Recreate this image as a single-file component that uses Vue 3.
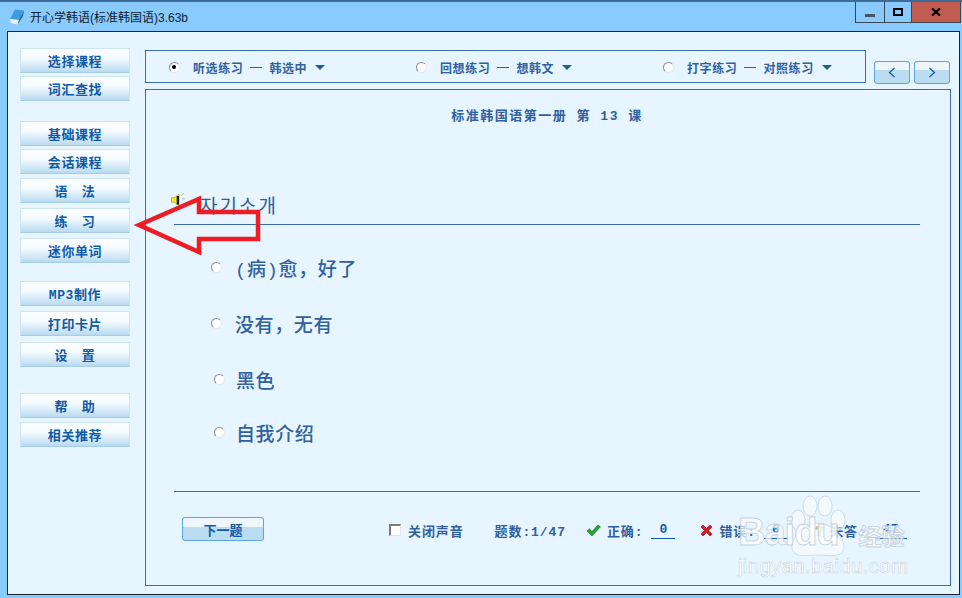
<script setup>
const navGroups = [
  [{ t: '选择课程' }, { t: '词汇查找' }],
  [{ t: '基础课程' }, { t: '会话课程' }, { t: '语　法', g: 1 }, { t: '练　习', g: 2 }, { t: '迷你单词', g: 2 }],
  [{ t: 'MP3制作' }, { t: '打印卡片', g: 2 }, { t: '设　置', g: 3 }],
  [{ t: '帮　助' }, { t: '相关推荐', g: 1 }],
]
const modes = [
  { a: '听选练习', b: '韩选中', on: true },
  { a: '回想练习', b: '想韩文' },
  { a: '打字练习', b: '对照练习' },
]
const options = ['(病)愈，好了', '没有，无有', '黑色', '自我介绍']
</script>

<template>
  <div class="win">
    <header class="titlebar">
      <svg class="book" width="16" height="16" viewBox="0 0 16 16">
        <path d="M6 0.5 L15 1.5 L10 11 L1 10 Z" fill="#3f9be0" />
        <path d="M1 10 L10 11 L8.5 15.5 L2 14 Z" fill="#eef2f6" />
        <path d="M10 11 L15 1.5 L14 7 L8.5 15.5 Z" fill="#2a5f94" />
      </svg>
      <span class="apptitle">开心学韩语(标准韩国语)3.63b</span>
      <div class="wctl">
        <div class="wbtn wmin"><i></i></div>
        <div class="wbtn wmax"><i></i></div>
        <div class="wbtn wclose">
          <svg width="10" height="8" viewBox="0 0 10 8"><path d="M1 0.5 L9 7.5 M9 0.5 L1 7.5" stroke="#000" stroke-width="2.2" /></svg>
        </div>
      </div>
    </header>

    <div class="client">
      <aside class="side">
        <div v-for="(grp, i) in navGroups" :key="i" class="grp">
          <button
            v-for="n in grp"
            :key="n.t"
            class="navbtn"
            :style="n.g ? { marginTop: n.g + 'px' } : null"
          >{{ n.t }}</button>
        </div>
      </aside>

      <main class="main">
        <div class="toprow">
          <div class="modes">
            <label v-for="m in modes" :key="m.a" class="mode">
              <span class="radio small" :class="{ on: m.on }"></span>
              <span class="mtext">{{ m.a }}</span>
              <span class="mdash"></span>
              <span class="mtext">{{ m.b }}</span>
              <span class="caret"></span>
            </label>
          </div>
          <div class="arrows">
            <button class="arrbtn">
              <svg width="8" height="11" viewBox="0 0 8 11"><path d="M6.5 1 L1.5 5.5 L6.5 10" fill="none" stroke="#0f5aa8" stroke-width="1.2" /></svg>
            </button>
            <button class="arrbtn">
              <svg width="8" height="11" viewBox="0 0 8 11"><path d="M1.5 1 L6.5 5.5 L1.5 10" fill="none" stroke="#0f5aa8" stroke-width="1.2" /></svg>
            </button>
          </div>
        </div>

        <section class="panel">
          <h1 class="ptitle">标准韩国语第一册 第 13 课</h1>
          <div class="question">
            <svg class="speaker" width="16" height="14" viewBox="0 0 14 12">
              <path d="M0.5 4 H3 L7 1 V11 L3 8 H0.5 Z" fill="#f4ea1e" stroke="#a99a10" stroke-width="0.6" />
              <path d="M5 2.5 H7 V10 H5 Z" fill="#111" />
              <path d="M9 2 L11 0.5 M9.5 5 H12" stroke="#9aa4ad" stroke-width="0.8" />
            </svg>
            <span class="korean">자기소개</span>
          </div>
          <ul class="opts">
            <li v-for="(o, i) in options" :key="o" class="opt" :class="'opt' + i">
              <span class="radio"></span>
              <span>{{ o }}</span>
            </li>
          </ul>
          <div class="foot">
            <button class="nextbtn">下一题</button>
            <div class="stats">
              <span class="check"></span>
              <span class="st s-mute">关闭声音</span>
              <span class="st s-count">题数:1/47</span>
              <svg class="ico" width="15" height="13" viewBox="0 0 15 13"><path d="M1 7 L3.5 4.8 L6 7.5 L12 1 L14.5 2.8 L6 12 Z" fill="#2ca02c" stroke="#137a1c" stroke-width="0.6" /></svg>
              <span class="st">正确:</span><span class="val v0">0</span>
              <svg class="ico ico-x" width="13" height="13" viewBox="0 0 13 13"><path d="M1 3 L3 1 L6.5 4.5 L10 1 L12 3 L8.5 6.5 L12 10 L10 12 L6.5 8.5 L3 12 L1 10 L4.5 6.5 Z" fill="#e8141c" stroke="#8e0c12" stroke-width="0.6" /></svg>
              <span class="st">错误:</span><span class="val v1">0</span>
              <span class="qm">?</span>
              <span class="st">未答:</span><span class="val v2">47</span>
            </div>
          </div>
        </section>
      </main>
    </div>

    <!-- annotation arrow drawn over the window -->
    <svg class="redarrow" width="130" height="64" viewBox="0 0 130 64">
      <path d="M6 31 L66 5 L66 18 L125 18 L125 45 L66 45 L66 58 Z" fill="none" stroke="#ee1c25" stroke-width="4.5" stroke-linejoin="miter" />
    </svg>

    <!-- watermark -->
    <div class="wm">
      <svg class="paw" width="60" height="64" viewBox="0 0 60 64">
        <g fill="#fff" fill-opacity="0.5" stroke="#c8d4dc" stroke-width="0.8">
          <ellipse cx="9" cy="25" rx="7" ry="10" />
          <ellipse cx="21" cy="11" rx="7" ry="10" />
          <ellipse cx="36" cy="11" rx="7" ry="10" />
          <ellipse cx="49" cy="25" rx="7" ry="10" />
          <path d="M29 28 C40 28 55 40 55 52 C55 64 38 60 29 60 C20 60 3 64 3 52 C3 40 18 28 29 28 Z" />
        </g>
      </svg>
      <div class="wm1"><b>Bai</b><b class="du">du</b><span class="jy">经验</span></div>
      <div class="wm2">jingyan.baidu.com</div>
    </div>
  </div>
</template>

<style>
html, body { margin: 0; padding: 0; background: #8acbff; }
</style>

<style scoped>
* { box-sizing: border-box; }
.win {
  position: relative;
  width: 962px;
  height: 598px;
  overflow: hidden;
  background: #8acbff;
  border-top: 2px solid #3d6b96;
  font-family: "Liberation Mono", "Noto Sans CJK SC", monospace;
  color: #31609f;
}
.titlebar {
  height: 29px;
  display: flex;
  align-items: center;
  padding-left: 9px;
}
.apptitle {
  margin-left: 5px;
  font-family: "Liberation Sans", "Noto Sans CJK SC", sans-serif;
  font-size: 12px;
  color: #10202c;
}
.wctl {
  margin-left: auto;
  margin-right: 1px;
  align-self: flex-start;
  display: flex;
  height: 21px;
  border: 1px solid #3a4650;
  border-top: 0;
}
.wbtn { display: flex; align-items: center; justify-content: center; }
.wmin { width: 29px; border-right: 1px solid #3a4650; }
.wmin i { display: block; width: 10px; height: 3px; background: #4a5560; margin-top: 6px; }
.wmax { width: 27px; border-right: 1px solid #3a4650; }
.wmax i { display: block; width: 10px; height: 8px; border: 2px solid #000; }
.wclose { width: 48px; background: #c25b50; }
.client {
  margin-left: 7px;
  margin-right: 2px;
  height: 564px;
  border: 1px solid #1c2430;
  background: #e6f5ff;
  display: flex;
}
.side {
  width: 137px;
  padding: 16px 0 0 12px;
  flex: none;
}
.grp { display: flex; flex-direction: column; margin-bottom: 17px; }
.grp:nth-child(2) { margin-bottom: 15px; }
.grp:nth-child(3) { margin-bottom: 23px; }
.navbtn {
  width: 110px;
  height: 25px;
  margin: 0 0 3px;
  padding: 0;
  border: 1px solid #cce4f3;
  border-bottom-color: #a5cde9;
  background: linear-gradient(#fcfeff 0%, #f5fbff 40%, #b9daf0 100%);
  color: #0f5aa8;
  font: 700 13px "Liberation Mono", "Noto Sans CJK SC", monospace;
  letter-spacing: 0.6px;
}
.main { flex: 1; display: flex; flex-direction: column; padding-top: 18px; }
.toprow { display: flex; height: 39px; flex: none; }
.modes {
  flex: none;
  width: 721px;
  height: 33px;
  border: 1px solid #3b6cad;
  display: flex;
  align-items: center;
  padding: 2px 0 0 23px;
}
.mode { flex: none; display: flex; align-items: center; font-size: 12px; font-weight: 700; width: 247px; white-space: nowrap; }
.mode .mtext { letter-spacing: 0.6px; }
.mode .radio { margin-right: 13px; }
.mdash { display: inline-block; width: 12px; height: 1px; background: #31609f; margin: 0 7px 0 7px; }
.caret {
  width: 0; height: 0; margin-left: 8px;
  border: 5px solid transparent;
  border-top: 5px solid #1f5f94;
  border-bottom: 0;
}
.radio {
  flex: none;
  display: inline-block;
  width: 11px;
  height: 11px;
  border-radius: 50%;
  background: #fff;
  border: 1.5px solid #8b8b8b;
  border-right-color: #e8e8e8;
  border-bottom-color: #e8e8e8;
  position: relative;
}
.radio.on::after {
  content: "";
  position: absolute;
  left: 2px; top: 2px;
  width: 4px; height: 4px;
  border-radius: 50%;
  background: #000;
}
.arrows { display: flex; gap: 4px; margin-left: 8px; margin-top: 11px; }
.arrbtn {
  width: 36px;
  height: 23px;
  padding: 0;
  border: 1px solid #5aa6de;
  border-radius: 3px;
  background: linear-gradient(#eef6fb 0 40%, #bcdcf2 40% 100%);
  display: flex;
  align-items: center;
  justify-content: center;
}
.panel {
  width: 806px;
  height: 497px;
  flex: none;
  border: 1px solid #3b6cad;
  padding: 0 30px 0 28px;
  display: flex;
  flex-direction: column;
}
.ptitle {
  margin: 17px 0 0;
  height: 19px;
  line-height: 19px;
  text-align: center;
  font-size: 13px;
  font-weight: 700;
  letter-spacing: 1.5px;
  color: #31609f;
}
.question {
  margin-top: 52px;
  height: 47px;
  border-bottom: 1px solid #3b6cad;
  position: relative;
  padding-left: 26px;
}
.speaker { position: absolute; left: -3px; top: 15px; }
.korean { font-family: "Noto Sans CJK KR", sans-serif; font-size: 19px; line-height: 30px; padding-top: 12px; display: block; letter-spacing: 2px; }
.opts { list-style: none; margin: 0; padding: 0; height: 266px; }
.opt {
  display: flex;
  align-items: center;
  height: 27px;
  font-size: 19px;
  font-weight: 500;
  letter-spacing: 0.6px;
  color: #31609f;
}
.opt .radio { margin-right: 13px; }
.opt0 { margin-top: 29px; margin-left: 37px; }
.opt1 { margin-top: 29px; margin-left: 37px; }
.opt2 { margin-top: 29px; margin-left: 40px; }
.opt3 { margin-top: 26px; margin-left: 40px; }
.opt2 .radio, .opt3 .radio { margin-right: 11px; }
.foot {
  border-top: 1px solid #3b6cad;
  display: flex;
  align-items: flex-start;
  padding: 25px 0 0 8px;
}
.nextbtn {
  width: 82px;
  height: 24px;
  padding: 0;
  border: 1px solid #5aa6de;
  border-radius: 3px;
  background: linear-gradient(#eef6fb 0 40%, #bcdcf2 40% 100%);
  color: #0f5aa8;
  font: 700 13px "Noto Sans CJK SC", sans-serif;
}
.stats {
  display: flex;
  align-items: center;
  height: 26px;
  margin-left: 125px;
  font-size: 13px;
  font-weight: 700;
  white-space: nowrap;
}
.check {
  width: 12px; height: 12px;
  background: #fff;
  border: 2px solid #7c7c7c;
  border-right: 1px solid #e4e4e4;
  border-bottom: 1px solid #e4e4e4;
  margin-right: 7px;
}
.st { letter-spacing: 0.9px; }
.s-count { margin-left: 31px; }
.ico { margin-left: 20px; margin-right: 6px; }
.ico-x { margin-left: 25px; margin-right: 6px; }
.val {
  display: inline-block;
  border-bottom: 1px solid #0f5aa8;
  color: #0f5aa8;
  text-align: center;
  height: 18px;
  line-height: 17px;
  margin-left: 8px;
  width: 24px;
}
.v2 { width: 32px; }
.qm { color: #e9d81e; font: 700 15px "Liberation Sans", sans-serif; margin-left: 27px; margin-right: 6px; -webkit-text-stroke: 0.6px #4a4400; }
.redarrow { position: absolute; left: 133px; top: 192px; pointer-events: none; }
.wm {
  position: absolute;
  left: 738px;
  top: 492px;
  width: 180px;
  height: 100px;
  color: #fff;
  pointer-events: none;
}
.paw { position: absolute; left: 51px; top: 1px; }
.wm1 {
  position: absolute; left: 0; top: 19px;
  font: 700 38px/38px "Liberation Sans", sans-serif;
  white-space: nowrap;
  color: rgba(255,255,255,0.7);
  letter-spacing: -1px;
  -webkit-text-stroke: 0.8px #c4d0d9;
}
.wm1 .jy { font: 700 23px/38px "Noto Sans CJK SC", sans-serif; letter-spacing: 0; margin-left: 20px; }
.wm2 {
  position: absolute; left: 0; top: 60px;
  font: 400 20.5px/24px "Liberation Sans", sans-serif;
  letter-spacing: 0.3px;
  color: #fff;
  -webkit-text-stroke: 0.5px #c4d0d9;
  white-space: nowrap;
}
</style>
